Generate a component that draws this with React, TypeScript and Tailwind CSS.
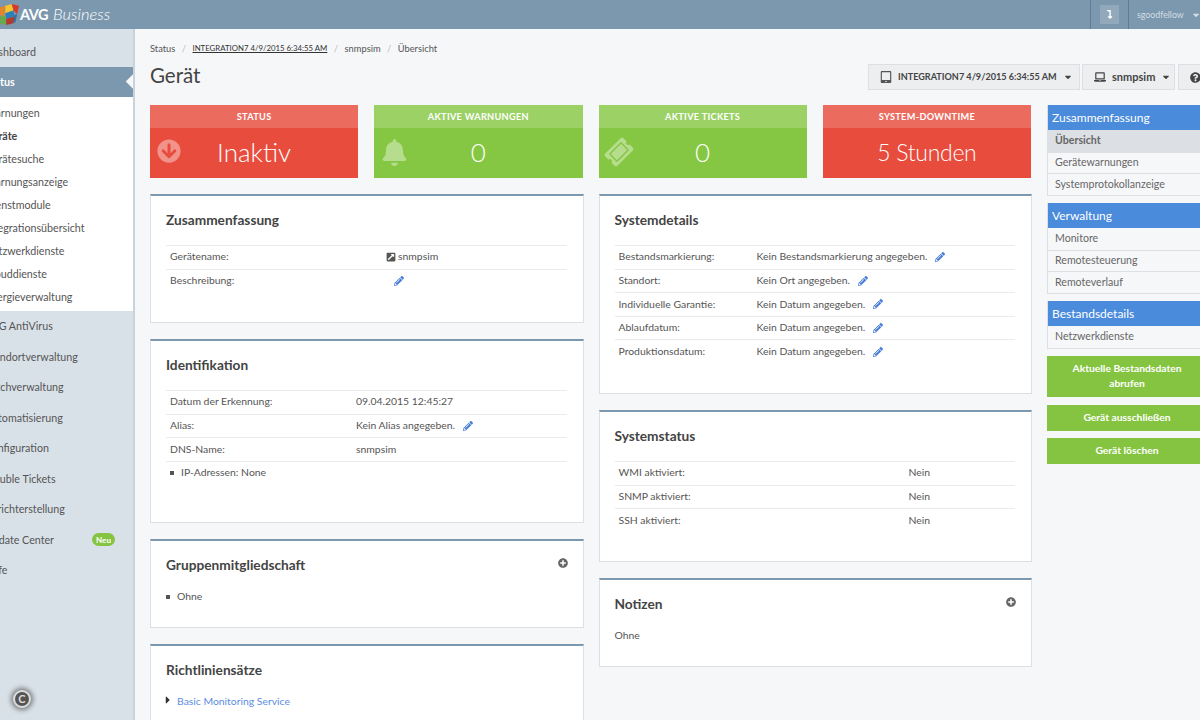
import React from 'react';
import {
  FaArrowCircleDown,
  FaBell,
  FaTicketAlt,
  FaPlusCircle,
  FaPencilAlt,
  FaQuestionCircle,
  FaLaptop,
  FaTabletAlt,
  FaExternalLinkSquareAlt,
  FaCaretDown,
  FaCaretRight,
  FaLevelDownAlt,
} from 'react-icons/fa';

const font = "font-['Lato','Noto_Sans',sans-serif]";

const topNav = ['Dashboard'];
const statusSub = [
  'Warnungen',
  'Geräte',
  'Gerätesuche',
  'Warnungsanzeige',
  'Dienstmodule',
  'Integrationsübersicht',
  'Netzwerkdienste',
  'Clouddienste',
  'Energieverwaltung',
];
const bottomNav = [
  'AVG AntiVirus',
  'Standortverwaltung',
  'Patchverwaltung',
  'Automatisierung',
  'Konfiguration',
  'Trouble Tickets',
  'Berichterstellung',
  'Update Center',
  'Hilfe',
];

function Logo() {
  return (
    <svg width="21" height="24" viewBox="0 0 23 26" className="shrink-0">
      <path d="M0 5 L8 3 L7 14 L0 13 Z" fill="#e2852b" />
      <path d="M8 3 L15 1 L17 8 L8 11 Z" fill="#f2c632" />
      <path d="M8 11 L17 8 L18 15 L9 17 Z" fill="#2a7fb8" />
      <path d="M15 1 L23 3 L21 12 L17 8 Z" fill="#d63a2a" />
      <path d="M0 13 L9 15 L9 24 L0 22 Z" fill="#6aa84f" />
      <path d="M9 17 L18 15 L17 22 L9 24 Z" fill="#b5392f" />
      <path d="M18 13 L21 12 L19 21 L17 22 Z" fill="#2f6f9f" />
    </svg>
  );
}

function Tile({ title, value, color, head, icon, valueSize }: { title: string; value: string; color: string; head: string; icon?: React.ReactNode; valueSize: string }) {
  return (
    <div className={`flex h-[73px] flex-col ${color}`}>
      <div className={`flex h-[23px] items-center justify-center text-[9.2px] font-bold tracking-[0.3px] text-white ${head}`}>{title}</div>
      <div className="relative flex flex-1 items-center justify-center pb-[1px] text-white">
        {icon && <span className="absolute left-[7px] top-[11px] text-white/40">{icon}</span>}
        <span className={`font-light ${valueSize}`}>{value}</span>
      </div>
    </div>
  );
}

function Panel({ title, children, className, plus }: { title: string; children: React.ReactNode; className: string; plus?: boolean }) {
  return (
    <section className={`relative border border-[#dcdfe3] border-t-2 border-t-[#7b98ae] bg-white pl-[15px] pr-[16px] ${className}`}>
      <h3 className="mt-[14px] h-[20px] text-[13.7px] leading-[20px] font-bold text-[#444]">{title}</h3>
      {plus && <FaPlusCircle className="absolute right-[15px] top-[17px] text-[10px] text-[#666]" />}
      {children}
    </section>
  );
}

function Row({ label, value, edit, labelWidth }: { label: string; value?: React.ReactNode; edit?: boolean; labelWidth: string }) {
  return (
    <div className="flex h-[23.6px] items-center border-t border-[#e8eaec] px-[4px] text-[10.4px] text-[#555]">
      <span className={`shrink-0 ${labelWidth}`}>{label}</span>
      <span>{value}</span>
      {edit && <FaPencilAlt className="ml-[8px] text-[10px] text-[#4a7fd8]" />}
    </div>
  );
}

function RailGroup({ title, items, active }: { title: string; items: string[]; active?: string }) {
  return (
    <div className="border-x border-b border-[#dcdfe3]">
      <div className="flex h-[25px] items-center bg-[#4a8bdc] pl-[4px] text-[12px] text-white">{title}</div>
      {items.map((item, i) => (
        <div
          key={item}
          className={`flex h-[21.7px] items-center pl-[7px] text-[10.6px] text-[#666] ${i > 0 ? 'border-t border-[#dcdfe3]' : ''} ${item === active ? 'bg-[#dcdfe3] font-bold text-[#555]' : ''}`}
        >
          {item}
        </div>
      ))}
    </div>
  );
}

function GreenButton({ children, className }: { children: React.ReactNode; className: string }) {
  return (
    <div className={`flex items-center justify-center bg-[#85c441] px-3 text-center text-[10.3px] leading-[15px] font-bold text-white ${className}`}>{children}</div>
  );
}

function DropButton({ icon, label, width, labelSize }: { icon: React.ReactNode; label?: string; width: string; labelSize?: string }) {
  return (
    <div className={`flex h-[26px] shrink-0 items-center gap-[6px] border border-[#dcdfe3] bg-[#eceef0] pl-[11px] pr-[10px] font-bold whitespace-nowrap text-[#444] ${width}`}>
      {icon}
      {label && <span className={labelSize}>{label}</span>}
      {label && <FaCaretDown className="ml-auto shrink-0 text-[10px]" />}
    </div>
  );
}

export default function App() {
  return (
    <div className={`flex h-[720px] w-[1200px] flex-col overflow-hidden bg-[#f6f7f9] ${font}`}>
      <header className="flex h-[29px] shrink-0 items-center bg-[#7b98ae] text-white">
        <div className="flex items-center -ml-[2px]">
          <Logo />
          <span className="ml-[1px] text-[14.5px] font-bold tracking-[-0.5px]">AVG</span>
          <span className="ml-[5px] text-[16.5px] font-light italic">Business</span>
        </div>
        <div className="ml-auto flex h-full items-center">
          <div className="flex h-full w-[38px] items-center justify-center border-l border-[#5f7d94]">
            <div className="flex h-[19px] w-[19px] items-center justify-center bg-[#92a9bb] text-[9px]">
              <FaLevelDownAlt />
            </div>
          </div>
          <div className="flex h-full w-[72px] items-center gap-[8px] border-l border-[#5f7d94] pl-[8px] text-[8.8px] text-[#d4dde4]">
            <span>sgoodfellow</span>
            <FaCaretDown className="text-[10px]" />
          </div>
        </div>
      </header>

      <div className="flex min-h-0 flex-1">
        <aside className="relative w-[135px] shrink-0 overflow-hidden border-r-2 border-[#c9d3dc] bg-[#d9e1e8] text-[10.7px] text-[#555]">
          <div className="-ml-[30px]">
            {topNav.map((n) => (
              <div key={n} className="flex h-[38px] items-center pl-[15px] pt-[8px]">{n}</div>
            ))}
            <div className="flex h-[30px] items-center bg-[#7b98ae] pl-[15px] font-bold text-white">Status</div>
            <div className="bg-white pt-[5px] pb-[3px]">
              {statusSub.map((n) => (
                <div key={n} className={`flex h-[22.9px] items-center pl-[15px] ${n === 'Geräte' ? 'font-bold text-[#444]' : ''}`}>{n}</div>
              ))}
            </div>
            <div>
              {bottomNav.map((n) => (
                <div key={n} className="flex h-[30.5px] items-center pl-[15px]">
                  {n}
                  {n === 'Update Center' && <span className="absolute right-[18px] flex h-[13px] w-[23px] items-center justify-center rounded-full bg-[#85c441] text-[8px] font-bold text-white">Neu</span>}
                </div>
              ))}
            </div>
          </div>
          <div className="absolute bottom-[12px] left-[13px] flex h-[18px] w-[18px] items-center justify-center rounded-full border-2 border-[#ddd] bg-[#555] text-[11px] font-bold text-[#ddd] shadow-[0_0_5px_2px_rgba(0,0,0,0.45)]">C</div>
          <div className="absolute left-[128px] top-[47px] h-[11px] w-[11px] rotate-45 bg-[#f6f7f9]"></div>
        </aside>

        <main className="min-w-0 flex-1 pl-[15px]">
          <nav className="flex h-[37px] items-center gap-[6.5px] pt-[2px] text-[9.3px] text-[#555]">
            <span>Status</span>
            <span className="text-[#bbb]">/</span>
            <span className="text-[7.8px] text-[#333] underline">INTEGRATION7 4/9/2015 6:34:55 AM</span>
            <span className="text-[#bbb]">/</span>
            <span>snmpsim</span>
            <span className="text-[#bbb]">/</span>
            <span>Übersicht</span>
          </nav>
          <div className="flex h-[39px] items-start">
            <h1 className="text-[20.5px] leading-[18px] text-[#444]">Gerät</h1>
            <div className="ml-auto -mr-[14px] -mt-[2px] flex gap-[2px]">
              <DropButton width="w-[212px]" labelSize="text-[9.1px]" icon={<FaTabletAlt className="shrink-0 text-[12px] text-[#555]" />} label="INTEGRATION7 4/9/2015 6:34:55 AM" />
              <DropButton width="w-[93px]" labelSize="text-[11px]" icon={<FaLaptop className="shrink-0 text-[12px]" />} label="snmpsim" />
              <DropButton width="w-[36px] ml-[1px]" icon={<FaQuestionCircle className="shrink-0 text-[11px]" />} />
            </div>
          </div>

          <div className="flex">
            <div className="w-[882px] shrink-0">
              <div className="grid w-[881px] grid-cols-4 gap-[16px]">
                <Tile title="STATUS" value="Inaktiv" valueSize="text-[26px]" color="bg-[#e84c3d]" head="bg-[#ec6b5f]" icon={<FaArrowCircleDown className="text-[24px]" />} />
                <Tile title="AKTIVE WARNUNGEN" value="0" valueSize="text-[26px]" color="bg-[#85c742]" head="bg-[#9bd165]" icon={<FaBell className="text-[27px]" />} />
                <Tile title="AKTIVE TICKETS" value="0" valueSize="text-[26px]" color="bg-[#85c742]" head="bg-[#9bd165]" icon={<FaTicketAlt className="-rotate-45 text-[26px]" />} />
                <Tile title="SYSTEM-DOWNTIME" value="5 Stunden" valueSize="text-[23px] tracking-[-0.3px]" color="bg-[#e84c3d]" head="bg-[#ec6b5f]" />
              </div>

              <div className="mt-[16px] grid grid-cols-2 gap-x-[15px]">
                <div className="flex flex-col gap-[16px]">
                  <Panel title="Zusammenfassung" className="h-[129px]">
                    <div className="mt-[15px]">
                      <Row label="Gerätename:" labelWidth="w-[216px]" value={<span className="flex items-center gap-[2px]"><FaExternalLinkSquareAlt className="text-[10px] text-[#555]" />snmpsim</span>} />
                      <Row label="Beschreibung:" labelWidth="w-[224px]" value={<FaPencilAlt className="text-[10px] text-[#4a7fd8]" />} />
                    </div>
                  </Panel>
                  <Panel title="Identifikation" className="h-[184px]">
                    <div className="mt-[15px]">
                      <Row label="Datum der Erkennung:" labelWidth="w-[186px]" value="09.04.2015 12:45:27" />
                      <Row label="Alias:" labelWidth="w-[186px]" value="Kein Alias angegeben." edit />
                      <Row label="DNS-Name:" labelWidth="w-[186px]" value="snmpsim" />
                      <div className="flex h-[23.6px] items-center border-t border-[#e8eaec] pl-[4px] text-[10.4px] text-[#555]">
                        <span className="mr-[7px] h-[4px] w-[4px] bg-[#555]"></span>IP-Adressen: None
                      </div>
                    </div>
                  </Panel>
                  <Panel title="Gruppenmitgliedschaft" className="h-[89px]" plus>
                    <div className="mt-[14px] flex items-center text-[10.4px] text-[#555]">
                      <span className="mr-[7px] h-[4px] w-[4px] bg-[#555]"></span>Ohne
                    </div>
                  </Panel>
                  <Panel title="Richtliniensätze" className="h-[90px]">
                    <div className="mt-[14px] flex items-center text-[10.4px] text-[#5b8de0]">
                      <FaCaretRight className="-mt-[3px] -ml-[4px] mr-[3px] text-[12px] text-[#333]" />Basic Monitoring Service
                    </div>
                  </Panel>
                </div>

                <div className="flex flex-col gap-[16px]">
                  <Panel title="Systemdetails" className="h-[200px]">
                    <div className="mt-[15px]">
                      <Row label="Bestandsmarkierung:" labelWidth="w-[138px]" value="Kein Bestandsmarkierung angegeben." edit />
                      <Row label="Standort:" labelWidth="w-[138px]" value="Kein Ort angegeben." edit />
                      <Row label="Individuelle Garantie:" labelWidth="w-[138px]" value="Kein Datum angegeben." edit />
                      <Row label="Ablaufdatum:" labelWidth="w-[138px]" value="Kein Datum angegeben." edit />
                      <Row label="Produktionsdatum:" labelWidth="w-[138px]" value="Kein Datum angegeben." edit />
                    </div>
                  </Panel>
                  <Panel title="Systemstatus" className="h-[152px]">
                    <div className="mt-[15px]">
                      <Row label="WMI aktiviert:" labelWidth="w-[290px]" value="Nein" />
                      <Row label="SNMP aktiviert:" labelWidth="w-[290px]" value="Nein" />
                      <Row label="SSH aktiviert:" labelWidth="w-[290px]" value="Nein" />
                    </div>
                  </Panel>
                  <Panel title="Notizen" className="h-[89px]" plus>
                    <div className="mt-[14px] text-[10.4px] text-[#555]">Ohne</div>
                  </Panel>
                </div>
              </div>
            </div>

            <div className="ml-[15px] w-[160px] shrink-0">
              <RailGroup title="Zusammenfassung" items={['Übersicht', 'Gerätewarnungen', 'Systemprotokollanzeige']} active="Übersicht" />
              <div className="mt-[7px]">
                <RailGroup title="Verwaltung" items={['Monitore', 'Remotesteuerung', 'Remoteverlauf']} />
              </div>
              <div className="mt-[7px]">
                <RailGroup title="Bestandsdetails" items={['Netzwerkdienste']} />
              </div>
              <GreenButton className="mt-[7px] h-[41px]">Aktuelle Bestandsdaten<br />abrufen</GreenButton>
              <GreenButton className="mt-[8px] h-[26px]">Gerät ausschließen</GreenButton>
              <GreenButton className="mt-[7px] h-[26px]">Gerät löschen</GreenButton>
            </div>
          </div>
        </main>
      </div>
    </div>
  );
}
